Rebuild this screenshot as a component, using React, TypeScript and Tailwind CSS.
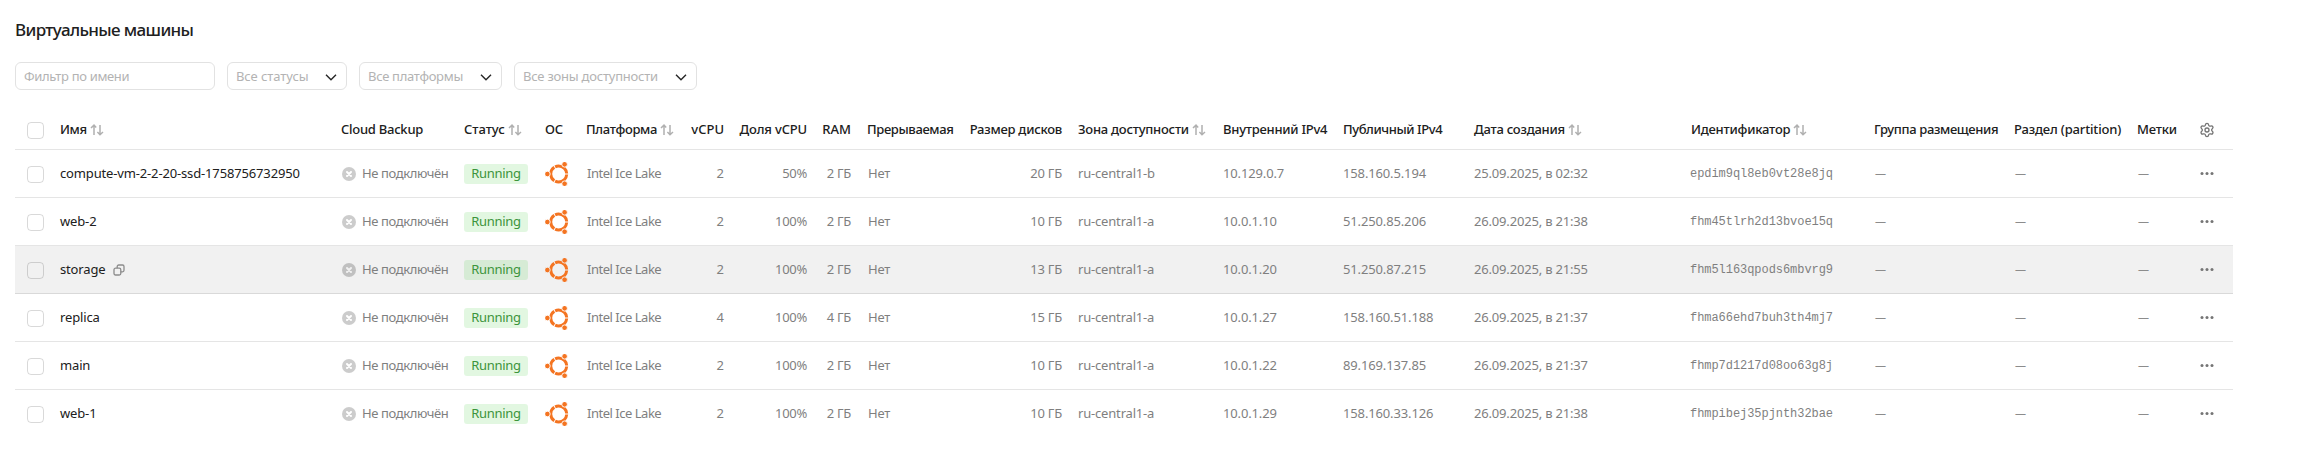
import type { ReactNode } from "react";
import { Settings } from "lucide-react";

const grid =
  "grid grid-cols-[37px_281px_123px_81px_41px_105px_49px_83px_44px_104px_107px_145px_120px_131px_217px_183px_140px_123px_56px_48px] items-center whitespace-nowrap";

type Header = { label: string; tracking: string; sort?: boolean; right?: boolean };

const headers: Header[] = [
  { label: "Имя", tracking: "tracking-[-0.4px]", sort: true },
  { label: "Cloud Backup", tracking: "tracking-[-0.25px]" },
  { label: "Статус", tracking: "tracking-[-0.05px]", sort: true },
  { label: "ОС", tracking: "tracking-[-0.3px]" },
  { label: "Платформа", tracking: "tracking-[-0.34px]", sort: true },
  { label: "vCPU", tracking: "tracking-[0px]", right: true },
  { label: "Доля vCPU", tracking: "tracking-[-0.16px]", right: true },
  { label: "RAM", tracking: "tracking-[0px]", right: true },
  { label: "Прерываемая", tracking: "tracking-[-0.37px]" },
  { label: "Размер дисков", tracking: "tracking-[-0.24px]", right: true },
  { label: "Зона доступности", tracking: "tracking-[-0.24px]", sort: true },
  { label: "Внутренний IPv4", tracking: "tracking-[-0.25px]" },
  { label: "Публичный IPv4", tracking: "tracking-[-0.42px]" },
  { label: "Дата создания", tracking: "tracking-[-0.24px]", sort: true },
  { label: "Идентификатор", tracking: "tracking-[-0.22px]", sort: true },
  { label: "Группа размещения", tracking: "tracking-[-0.36px]" },
  { label: "Раздел (partition)", tracking: "tracking-[-0.16px]" },
  { label: "Метки", tracking: "tracking-[-0.2px]" },
];

type Vm = {
  name: string;
  cpu: string;
  share: string;
  ram: string;
  disk: string;
  zone: string;
  internal: string;
  external: string;
  created: string;
  id: string;
  active?: boolean;
};

const vms: Vm[] = [
  { name: "compute-vm-2-2-20-ssd-1758756732950", cpu: "2", share: "50%", ram: "2 ГБ", disk: "20 ГБ", zone: "ru-central1-b", internal: "10.129.0.7", external: "158.160.5.194", created: "25.09.2025, в 02:32", id: "epdim9ql8eb0vt28e8jq" },
  { name: "web-2", cpu: "2", share: "100%", ram: "2 ГБ", disk: "10 ГБ", zone: "ru-central1-a", internal: "10.0.1.10", external: "51.250.85.206", created: "26.09.2025, в 21:38", id: "fhm45tlrh2d13bvoe15q" },
  { name: "storage", cpu: "2", share: "100%", ram: "2 ГБ", disk: "13 ГБ", zone: "ru-central1-a", internal: "10.0.1.20", external: "51.250.87.215", created: "26.09.2025, в 21:55", id: "fhm5l163qpods6mbvrg9", active: true },
  { name: "replica", cpu: "4", share: "100%", ram: "4 ГБ", disk: "15 ГБ", zone: "ru-central1-a", internal: "10.0.1.27", external: "158.160.51.188", created: "26.09.2025, в 21:37", id: "fhma66ehd7buh3th4mj7" },
  { name: "main", cpu: "2", share: "100%", ram: "2 ГБ", disk: "10 ГБ", zone: "ru-central1-a", internal: "10.0.1.22", external: "89.169.137.85", created: "26.09.2025, в 21:37", id: "fhmp7d1217d08oo63g8j" },
  { name: "web-1", cpu: "2", share: "100%", ram: "2 ГБ", disk: "10 ГБ", zone: "ru-central1-a", internal: "10.0.1.29", external: "158.160.33.126", created: "26.09.2025, в 21:38", id: "fhmpibej35pjnth32bae" },
];

function SortIcon() {
  return (
    <svg className="ml-[3px] mt-px h-3 w-[14px] shrink-0" viewBox="0 0 14 12" fill="none" stroke="#b0b0b0" strokeWidth="1.5">
      <path d="M4 11V1.2M1 4L4 1.1L6.2 3.4M10 1V10.6M7.4 8L10 10.7L13 8" />
    </svg>
  );
}

function Checkbox() {
  return (
    <div className="pl-3 pt-0.5">
      <div className="h-[17px] w-[17px] rounded-[4px] border border-black/15" />
    </div>
  );
}

function NotConnectedIcon({ bg }: { bg: string }) {
  return (
    <svg className="ml-px mt-px h-[14px] w-[14px] shrink-0" viewBox="0 0 14 14">
      <circle cx="7" cy="7" r="7" fill="#000" fillOpacity="0.2" />
      <path d="M5 5L9 9M9 5L5 9" stroke={bg} strokeWidth="2" strokeLinecap="round" />
    </svg>
  );
}

function UbuntuIcon({ bg }: { bg: string }) {
  return (
    <svg className="h-6 w-6" viewBox="0 0 24 24">
      <circle cx="13.7" cy="12" r="8" fill="none" stroke="#f47421" strokeWidth="3" pathLength={360} strokeDasharray="113 7" strokeDashoffset="-3.5" />
      <g fill="#f47421" stroke={bg} strokeWidth="0.9">
        <circle cx="2.4" cy="12" r="2.8" />
        <circle cx="19.6" cy="2.3" r="2.8" />
        <circle cx="19.6" cy="21.7" r="2.8" />
      </g>
    </svg>
  );
}

function CopyIcon() {
  return (
    <svg className="ml-2 mt-0.5 h-3 w-3" viewBox="0 0 12 12" fill="none" stroke="#8c8c8c" strokeWidth="1.3">
      <rect x="1" y="4.2" width="6.8" height="6.8" rx="1.5" />
      <path d="M4.2 4.2V2.5A1.5 1.5 0 0 1 5.7 1H9.5A1.5 1.5 0 0 1 11 2.5V6.3A1.5 1.5 0 0 1 9.5 7.8H7.8" />
    </svg>
  );
}

function Select({ children, width }: { children: ReactNode; width: string }) {
  return (
    <div className={`flex h-7 items-center justify-between rounded-[6px] border border-[#e2e2e2] pb-px pl-2 pr-[9px] ${width}`}>
      {children}
      <svg className="mt-[3px] h-[7px] w-3" viewBox="0 0 12 7" fill="none" stroke="#262626" strokeWidth="1.4">
        <path d="M1 0.8L6 5.8L11 0.8" />
      </svg>
    </div>
  );
}

function Row({ vm, last }: { vm: Vm; last: boolean }) {
  const bg = vm.active ? "#f1f1f1" : "#ffffff";
  const border = last ? "border-b border-transparent" : vm.active ? "border-b border-[#d9d9d9]" : "border-b border-[#e5e5e5]";
  return (
    <div className={`${grid} h-12 text-[#7f7f7f] ${border} ${vm.active ? "bg-[#f1f1f1]" : ""}`}>
      <Checkbox />
      <div className="flex items-center px-2 pb-0.5 tracking-[-0.15px] text-[#202020]">
        {vm.name}
        {vm.active && <CopyIcon />}
      </div>
      <div className="flex items-center px-2">
        <NotConnectedIcon bg={bg} />
        <span className="ml-1.5 pb-0.5 tracking-[-0.4px]">Не подключён</span>
      </div>
      <div className="pl-2">
        <div className="flex h-5 w-16 items-center justify-center rounded-[3px] bg-[#3bc935]/15 pb-0.5 tracking-[-0.3px] text-[#3c943b]">Running</div>
      </div>
      <div className="pl-2">
        <UbuntuIcon bg={bg} />
      </div>
      <div className="pb-0.5 pl-[9px] tracking-[-0.48px]">Intel Ice Lake</div>
      <div className="px-2 pb-0.5 text-right">{vm.cpu}</div>
      <div className="px-2 pb-0.5 text-right tracking-[-0.3px]">{vm.share}</div>
      <div className="px-2 pb-0.5 text-right tracking-[-0.3px]">{vm.ram}</div>
      <div className="pb-0.5 pl-[9px] tracking-[-0.2px]">Нет</div>
      <div className="px-2 pb-0.5 text-right tracking-[-0.2px]">{vm.disk}</div>
      <div className="px-2 pb-0.5 tracking-[-0.18px]">{vm.zone}</div>
      <div className="px-2 pb-0.5 tracking-[-0.14px]">{vm.internal}</div>
      <div className="px-2 pb-0.5 tracking-[-0.14px]">{vm.external}</div>
      <div className="px-2 pb-0.5 tracking-[-0.18px]">{vm.created}</div>
      <div className="pl-[7px] pt-px font-['Liberation_Mono',monospace] text-[12px] tracking-[-0.05px]">{vm.id}</div>
      <div className="pb-0.5 pl-[9px] text-[11px] text-[#8c8c8c]">—</div>
      <div className="pb-0.5 pl-[9px] text-[11px] text-[#8c8c8c]">—</div>
      <div className="pb-0.5 pl-[9px] text-[11px] text-[#8c8c8c]">—</div>
      <div className="flex justify-start pl-[15px]">
        <svg className="h-[3px] w-[14px]" viewBox="0 0 14 3" fill="#757575">
          <circle cx="2" cy="1.5" r="1.5" />
          <circle cx="7" cy="1.5" r="1.5" />
          <circle cx="12" cy="1.5" r="1.5" />
        </svg>
      </div>
    </div>
  );
}

export default function App() {
  return (
    <main className="h-[471px] w-[2306px] overflow-hidden bg-white pl-[15px] pt-[18px] font-['Noto_Sans',sans-serif] text-[13px] leading-[18px] text-[#202020]">
      <h1 className="h-6 text-[17px] font-medium leading-6 tracking-[-0.64px]">Виртуальные машины</h1>
      <div className="mt-5 flex gap-3 text-[#b3b3b3]">
        <div className="flex h-7 w-[200px] items-center rounded-[6px] border border-[#e2e2e2] pl-2 tracking-[-0.33px]">Фильтр по имени</div>
        <Select width="w-[120px]"><span className="tracking-[-0.08px]">Все статусы</span></Select>
        <Select width="w-[143px]"><span className="tracking-[-0.3px]">Все платформы</span></Select>
        <Select width="w-[183px]"><span className="tracking-[-0.22px]">Все зоны доступности</span></Select>
      </div>
      <div className="mt-5 w-[2218px]">
        <div className={`${grid} h-10 border-b border-[#e5e5e5] font-medium`}>
          <Checkbox />
          {headers.map((h) => (
            <div key={h.label} className={`flex items-center px-2 ${h.right ? "justify-end" : ""}`}>
              <span className={`pb-0.5 ${h.tracking}`}>{h.label}</span>
              {h.sort && <SortIcon />}
            </div>
          ))}
          <div className="pl-3.5 pt-px">
            <Settings className="h-4 w-4 text-[#757575]" strokeWidth={2} />
          </div>
        </div>
        {vms.map((vm, i) => (
          <Row key={vm.id} vm={vm} last={i === vms.length - 1} />
        ))}
      </div>
    </main>
  );
}
